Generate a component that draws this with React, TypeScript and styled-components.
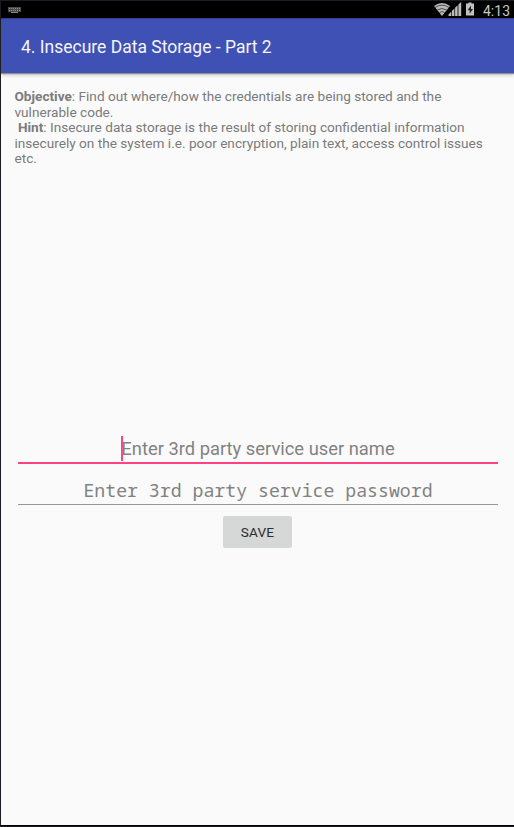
import React from "react";
import styled, { createGlobalStyle } from "styled-components";

const GlobalStyle = createGlobalStyle`
  * { box-sizing: border-box; }
  body { margin: 0; background: #fafafa; font-family: Roboto, sans-serif; }
`;

const Screen = styled.div`
  display: flex;
  flex-direction: column;
  width: 514px;
  height: 827px;
  overflow: hidden;
  background: #fafafa;
  border-left: 1px solid #1d1b22;
  border-top: 1px solid #1d1b22;
`;

const StatusBar = styled.header`
  display: flex;
  align-items: flex-start;
  flex: none;
  height: 17px;
  padding: 0 4px 0 7px;
  background: #000;
`;

const KeyboardIcon = styled.svg`
  margin: 6px auto 0 0;
`;

const StatusIcons = styled.svg`
  margin-right: 7px;
`;

const Clock = styled.span`
  margin-top: 2px;
  font-size: 14px;
  line-height: 17px;
  height: 15px;
  color: #c6c6c6;
`;

const AppBar = styled.div`
  display: flex;
  align-items: center;
  flex: none;
  height: 55px;
  padding: 2px 0 0 20px;
  background: #3f51b5;
  border-top: 1px solid #33408c;
  box-shadow: 0 1px 1px #8e8e8e, 0 2px 4px rgba(0, 0, 0, 0.22);
`;

const Title = styled.h1`
  margin: 0;
  font-size: 17.5px;
  font-weight: 400;
  line-height: 24px;
  color: #f4f5fb;
  white-space: nowrap;
`;

const Content = styled.main`
  display: flex;
  flex: 1;
  flex-direction: column;
  padding: 16px 16px 0 13.5px;
`;

const Instructions = styled.p`
  margin: 0;
  height: 346px;
  font-size: 13.63px;
  line-height: 15.5px;
  color: #7b7b7b;
  white-space: pre;
`;

const Label = styled.b`
  font-size: 13.6px;
`;

const Field = styled.div<{ $active?: boolean; $mono?: boolean }>`
  display: flex;
  justify-content: center;
  align-items: flex-start;
  flex: none;
  width: 480px;
  height: ${(p) => (p.$active ? 29 : 41)}px;
  margin-left: 3.5px;
  padding-top: ${(p) => (p.$active ? 1 : 14)}px;
  border-bottom: ${(p) => (p.$active ? "2px solid #ff4081" : "1px solid #979797")};
  font-family: ${(p) =>
    p.$mono ? '"Droid Sans Mono", "Noto Sans Mono", "Noto Mono", "DejaVu Sans Mono", monospace' : "Roboto, sans-serif"};
  font-size: ${(p) => (p.$mono ? 18.2 : 18.35)}px;
  line-height: 25px;
  color: #828282;
  white-space: nowrap;
`;

const Caret = styled.span`
  width: 2px;
  height: 25px;
  margin-right: -2px;
  background: #ff4081;
`;

const SaveButton = styled.button`
  flex: none;
  width: 69px;
  height: 32px;
  margin: 11px 0 0 208.5px;
  padding: 1px 0 0;
  border: 0;
  border-radius: 2px;
  background: #d6d7d7;
  font: 400 13.6px/31px Roboto, sans-serif;
  letter-spacing: 0.2px;
  color: #2c2d2d;
`;

const BottomEdge = styled.div`
  flex: none;
  height: 2px;
  background: #000;
  border-bottom: 1px solid #1d1b22;
`;

export default function App() {
  return (
    <>
      <GlobalStyle />
      <Screen>
        <StatusBar>
          <KeyboardIcon width="13" height="7" viewBox="0 0 13 7">
            <path d="M0 0h13v5H0z" fill="#4b4b4b" />
            <path d="M1 1.5h11M1 3.5h11" stroke="#8c8c8c" strokeDasharray="1 1" />
            <path d="M3 5.5h7" stroke="#888" />
          </KeyboardIcon>
          <StatusIcons width="42" height="16" viewBox="0 0 42 16">
            <path d="M0 5Q8 -1 16 5L8 15Z" fill="#b8b8b8" />
            <path d="M1 6.500Q8 1.800 15 6.500M3.300 9Q8 6 12.700 9M5.500 11.500Q8 9.800 10.500 11.500" fill="none" stroke="#333" strokeWidth=".8" />
            <path d="M14.500 15v-1.500l2.700-2.700V15zM17.900 15v-5l2.500-2.600V15zM21.100 15V6.800l2.500-2.500V15zM24.400 15V3.500L27.200 1v14z" fill="#bdbdbd" />
            <path d="M32 2.500h2.500V1.500h3v1H40V14.500h-8z" fill="#c2c2c2" />
            <path d="M37 4.500 33.500 9.200h2.200v3.500L39 8h-2z" fill="#222" />
          </StatusIcons>
          <Clock>4:13</Clock>
        </StatusBar>
        <AppBar>
          <Title>4. Insecure Data Storage - Part 2</Title>
        </AppBar>
        <Content>
          <Instructions>
            <Label>Objective</Label>: Find out where/how the credentials are being stored and the{"\n"}
            vulnerable code.{"\n"}
            {" "}<Label>Hint</Label>: Insecure data storage is the result of storing confidential information{"\n"}
            insecurely on the system i.e. poor encryption, plain text, access control issues{"\n"}
            etc.
          </Instructions>
          <Field $active>
            <Caret />
            <span>Enter 3rd party service user name</span>
          </Field>
          <Field $mono>
            <span>Enter 3rd party service password</span>
          </Field>
          <SaveButton>SAVE</SaveButton>
        </Content>
        <BottomEdge />
      </Screen>
    </>
  );
}
